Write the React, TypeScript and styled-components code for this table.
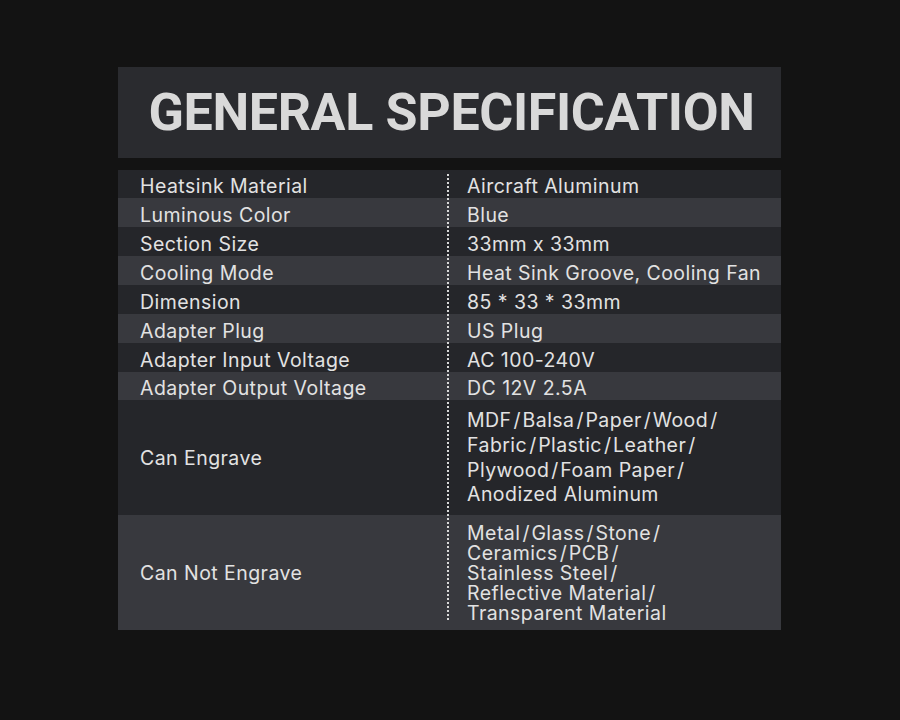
import React from "react";
import styled, { createGlobalStyle } from "styled-components";

const Global = createGlobalStyle`
  html, body { margin: 0; padding: 0; background: #131313; }
  body { font-family: Inter, "Noto Sans", sans-serif; }
`;

const Page = styled.div`
  width: 900px;
  height: 720px;
  background: #131313;
  padding: 67px 0 0 118px;
  box-sizing: border-box;
`;

const Panel = styled.div`
  width: 663px;
  display: flex;
  flex-direction: column;
  gap: 12px;
`;

const Header = styled.div`
  height: 91px;
  background: #2a2b2f;
  display: flex;
  align-items: center;
  justify-content: center;
`;

const Title = styled.h1`
  margin: 0;
  font-family: Roboto, "Liberation Sans", sans-serif;
  font-weight: 700;
  font-size: 52px;
  letter-spacing: -0.35px;
  color: #d9d9d9;
  line-height: 1;
  padding-left: 4px;
`;

const Table = styled.div`
  position: relative;
  display: grid;
  grid-template-columns: 330px 1fr;
  &::after {
    content: "";
    position: absolute;
    left: 329px;
    top: 4px;
    bottom: 9px;
    width: 2px;
    background: repeating-linear-gradient(
      to bottom,
      #d8d8d8 0 2px,
      transparent 2px 4px
    );
  }
`;

const Cell = styled.div<{ $light: boolean; $h: number; $value?: boolean; $lh?: number }>`
  height: ${(p) => p.$h}px;
  background: ${(p) => (p.$light ? "#38393e" : "#25262a")};
  display: flex;
  align-items: center;
  padding-left: ${(p) => (p.$value ? 19 : 22)}px;
  padding-top: ${(p) => (p.$h < 40 ? 4 : 0)}px;
  color: #e2e2e2;
  font-size: 19.5px;
  letter-spacing: 0.45px;
  line-height: ${(p) => p.$lh ?? 22}px;
  box-sizing: border-box;
`;

const Lines = styled.div`
  display: flex;
  flex-direction: column;
`;

const Line = styled.span`
  white-space: nowrap;
`;

const Slash = styled.span`
  margin: 0 1.5px 0 2px;
`;

type Row = { label: string; value: string[]; h: number; lh?: number };

const rows: Row[] = [
  { label: "Heatsink Material", value: ["Aircraft Aluminum"], h: 28 },
  { label: "Luminous Color", value: ["Blue"], h: 29 },
  { label: "Section Size", value: ["33mm x 33mm"], h: 29 },
  { label: "Cooling Mode", value: ["Heat Sink Groove, Cooling Fan"], h: 29 },
  { label: "Dimension", value: ["85 * 33 * 33mm"], h: 29 },
  { label: "Adapter Plug", value: ["US Plug"], h: 29 },
  { label: "Adapter Input Voltage", value: ["AC 100-240V"], h: 29 },
  { label: "Adapter Output Voltage", value: ["DC 12V 2.5A"], h: 28 },
  {
    label: "Can Engrave",
    value: [
      "MDF/Balsa/Paper/Wood/",
      "Fabric/Plastic/Leather/",
      "Plywood/Foam Paper/",
      "Anodized Aluminum",
    ],
    h: 115,
    lh: 24.7,
  },
  {
    label: "Can Not Engrave",
    value: [
      "Metal/Glass/Stone/",
      "Ceramics/PCB/",
      "Stainless Steel/",
      "Reflective Material/",
      "Transparent Material",
    ],
    h: 115,
    lh: 20,
  },
];

function renderLine(text: string) {
  const parts = text.split("/");
  return parts.map((part, i) => (
    <React.Fragment key={i}>
      {part}
      {i < parts.length - 1 && <Slash>/</Slash>}
    </React.Fragment>
  ));
}

export default function App() {
  return (
    <Page>
      <Global />
      <Panel>
        <Header>
          <Title>GENERAL SPECIFICATION</Title>
        </Header>
        <Table>
          {rows.map((r, i) => (
            <React.Fragment key={r.label}>
              <Cell $light={i % 2 === 1} $h={r.h}>
                {r.label}
              </Cell>
              <Cell $light={i % 2 === 1} $h={r.h} $value $lh={r.lh}>
                <Lines>
                  {r.value.map((v) => (
                    <Line key={v}>{renderLine(v)}</Line>
                  ))}
                </Lines>
              </Cell>
            </React.Fragment>
          ))}
        </Table>
      </Panel>
    </Page>
  );
}
